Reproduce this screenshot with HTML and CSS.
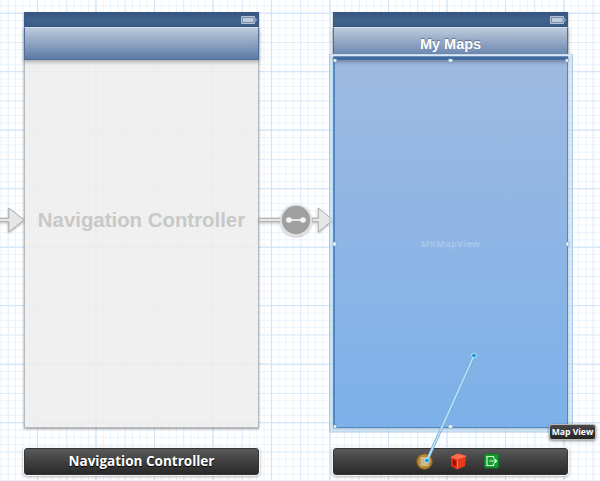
FILE: index.html
```
<!DOCTYPE html>
<html lang="en">
<head>
<meta charset="utf-8">
<title>Storyboard</title>
<link rel="stylesheet" href="styles.css">
</head>
<body>
<main class="canvas">
  <svg class="layer" viewBox="0 0 600 481">
    <defs>
      <pattern id="minor" x="0.4" y="5.4" width="7.3125" height="7.3125" patternUnits="userSpaceOnUse"><path d="M.5 0V7.4M0 .5H7.4" stroke="#e9f3fc" stroke-width=".9"/></pattern>
      <pattern id="mid" x="7.75" y="12.7" width="29.25" height="29.25" patternUnits="userSpaceOnUse"><path d="M.5 0V29.3M0 .5H29.3" stroke="#dfedfb"/></pattern>
      <pattern id="major" x="37" y="12.7" width="58.5" height="58.5" patternUnits="userSpaceOnUse"><path d="M.5 0V58.5M0 .5H58.5" stroke="#d0e4f9"/></pattern>
    </defs>
    <path fill="url(#minor)" d="M0 0H600V481H0z"/><path fill="url(#mid)" d="M0 0H600V481H0z"/><path fill="url(#major)" d="M0 0H600V481H0z"/>
  </svg>
  <section class="scene">
    <div class="phone">
      <div class="status"><svg width="16" height="8" viewBox="0 0 16 8"><path d="M.5 .5H13.5V2L15.5 4 13.5 6V7.5H.5z" fill="#7790b1" stroke="#b4c3d6"/><path d="M2 2H12.5V6H2z" fill="#c0cad9"/></svg></div>
      <div class="navbar"></div>
      <div class="content"><span class="placeholder">Navigation Controller</span></div>
    </div>
    <div class="dock"><span class="dock-title">Navigation Controller</span></div>
  </section>
  <section class="scene">
    <div class="phone">
      <div class="status"><svg width="16" height="8" viewBox="0 0 16 8"><path d="M.5 .5H13.5V2L15.5 4 13.5 6V7.5H.5z" fill="#7790b1" stroke="#b4c3d6"/><path d="M2 2H12.5V6H2z" fill="#c0cad9"/></svg></div>
      <div class="navbar"><span class="nav-title">My Maps</span></div>
      <div class="content map"><span class="map-label">MKMapView</span></div>
    </div>
    <div class="dock icons">
      <svg width="17" height="17" viewBox="0 0 17 17"><circle cx="8.5" cy="8.5" r="7.8" fill="#b88a37" stroke="#765620"/><path d="M5 4.5H12V12.5H5z" fill="#c9b58a" stroke="#d8bd80"/></svg>
      <svg width="17" height="17" viewBox="0 0 17 17"><path d="M.8 4 8 .6 16 3 15 13 7 16.4 1.5 13z" fill="#e83c1d"/><path d="M.8 4 8 .6 16 3 7.5 5.8z" fill="#ff6946"/><path d="M1 4 7.5 5.8 7 16 1.5 13z" fill="#e12d13"/><path d="M1 4 7.5 5.8 16 3M7.5 6V15.8M4.5 2.3 12 4.3" fill="none" stroke="#ff7856"/><path d="M2.8 7 5.8 7.8V13L3.2 11.8z" fill="#8f0d00"/></svg>
      <svg width="15" height="16" viewBox="0 0 15 16"><rect x=".5" y="1" width="14" height="14" rx="1.5" fill="#169c32" stroke="#087c23"/><path d="M9.5 5.5V3.5H3V12.5H9.5V10.5M5.5 8H12.5M10.3 5.8 12.6 8 10.3 10.2" fill="none" stroke="#d0f5d3" stroke-width="1.2"/></svg>
    </div>
  </section>
  <svg class="layer overlay" viewBox="0 0 600 481">
    <defs><filter id="soft" x="-20%" y="-20%" width="150%" height="150%"><feDropShadow dx="0" dy="1" stdDeviation=".8" flood-opacity=".3"/></filter></defs>
    <g filter="url(#soft)" fill="#e6e6e6" stroke="#ababab">
      <path d="M-5 218.3H8.8V208L24 220 8.8 232V221.7H-5z"/>
      <path d="M259 218.3H281V221.7H259z"/>
      <path d="M312 218.3H318.3V208L333 220 318.3 232V221.7H312z"/>
      <circle cx="296" cy="220" r="15" fill="#a0a0a0" stroke="#e2e2e2" stroke-width="1.6"/>
    </g>
    <path d="M289 220H303" stroke="#f5f5f5" stroke-width="1.6"/><circle cx="289" cy="220" r="2.8" fill="#f5f5f5"/><circle cx="303" cy="220" r="2.8" fill="#f5f5f5"/>
    <path d="M331.3 56V430H570.3V56" fill="none" stroke="#b9daf4" stroke-width="3.6" opacity=".6"/>
    <path d="M329.5 54.5H572.5V432H329.5z" fill="none" stroke="#a9c9e6"/>
    <path d="M331 55.5H571" stroke="#dfe9f4" stroke-width="2"/>
    <path d="M334 58H568" stroke="#3f69a0" stroke-width="3"/>
    <path d="M334.5 59V428M567.5 59V428M334 427.5H568" stroke="#5088c5" fill="none"/>
    <g fill="#f7fbfd" stroke="#779fc0" stroke-width=".6"><path d="M333.5 59h3v3h-3zM448.5 59h4v3h-4zM565.5 59h3v3h-3zM333 242h3v4h-3zM566 242h3v4h-3zM333.5 425h3v3h-3zM448.5 425h4v3h-4zM565.5 425h3v3h-3z"/></g>
    <path d="M474 355.5 427 460.5" stroke="#5f9fca" stroke-width="3"/><path d="M474 355.5 427 460.5" stroke="#b5dcf5" stroke-width="1.9"/>
    <g fill="#1696dd" stroke="#c0e6fa"><circle cx="474" cy="355.5" r="2.4"/><circle cx="427" cy="460.5" r="2.4"/></g>
  </svg>
  <div class="tooltip">Map View</div>
</main>
</body>
</html>
```
FILE: styles.css
```
* { box-sizing: border-box; }
body { margin: 0; }
.canvas {
  position: relative;
  display: grid;
  grid-template-columns: 235px 235px;
  column-gap: 74px;
  width: 600px;
  height: 481px;
  padding: 12px 0 0 24px;
  overflow: hidden;
  background: #fff;
  font-family: "Open Sans", "Noto Sans", sans-serif;
}
.layer {
  position: absolute;
  inset: 0;
  width: 600px;
  height: 481px;
  pointer-events: none;
}
.overlay { z-index: 2; }
.scene { position: relative; }
.phone {
  display: flex;
  flex-direction: column;
  height: 416px;
  box-shadow: 0 1px 2px rgba(0, 0, 0, .4);
}
.status {
  display: flex;
  align-items: center;
  justify-content: flex-end;
  height: 15px;
  padding-right: 1px;
  background: linear-gradient(#34557f, #40628d 50%, #3b5e8a);
  border: 1px solid #3b5982;
}
.navbar {
  display: flex;
  align-items: center;
  justify-content: center;
  height: 33px;
  background: linear-gradient(#bccbde, #8da3c2 50%, #5d7aa5);
  border: solid #506d98;
  border-width: 0 1px 1px;
  border-top: 1px solid #d2dfec;
  box-shadow: 0 2px 4px rgba(0, 0, 0, .3);
  z-index: 1;
}
.nav-title {
  color: #fff;
  font: bold 14.5px/18px "Liberation Sans", sans-serif;
  text-shadow: 0 -1px 1px #536985;
}
.content {
  display: flex;
  flex: 1;
  align-items: center;
  justify-content: center;
  background: rgba(237, 237, 237, .85);
  border: 1px solid #b9b9b9;
  border-top: 0;
}
.placeholder {
  margin-bottom: 47px;
  color: #c8c8c8;
  font: bold 20.4px/24px "Liberation Sans", sans-serif;
  white-space: nowrap;
}
.map {
  background: linear-gradient(#9eb9e1, #7cb1e9);
  border-color: #5685ba;
}
.map-label {
  color: #aac7ea;
  font: bold 9.5px/12px "Open Sans", sans-serif;
  letter-spacing: .1px;
}
.dock {
  display: flex;
  align-items: center;
  justify-content: center;
  height: 27px;
  margin-top: 19.5px;
  background: linear-gradient(#595959, #404040 50%, #292929);
  border: 1px solid #343434;
  border-radius: 3px;
  box-shadow: 0 0 0 1px #f6f6f6, 0 1px 3px 1px rgba(0, 0, 0, .3);
}
.dock-title {
  color: #fff;
  font-size: 13.5px;
  font-weight: 700;
  line-height: 18px;
  text-shadow: 0 1px 1px #000;
}
.icons {
  gap: 17px;
  padding-left: 14px;
}
.tooltip {
  position: absolute;
  z-index: 3;
  left: 550px;
  top: 425px;
  width: 45px;
  height: 14px;
  color: #fff;
  background: linear-gradient(#484848, #242424);
  border-radius: 2px;
  box-shadow: 0 0 0 1px #b9b9b9, 0 1px 3px 1px rgba(0, 0, 0, .45);
  font-size: 8.6px;
  font-weight: 700;
  line-height: 14px;
  text-align: center;
  white-space: nowrap;
}
```
